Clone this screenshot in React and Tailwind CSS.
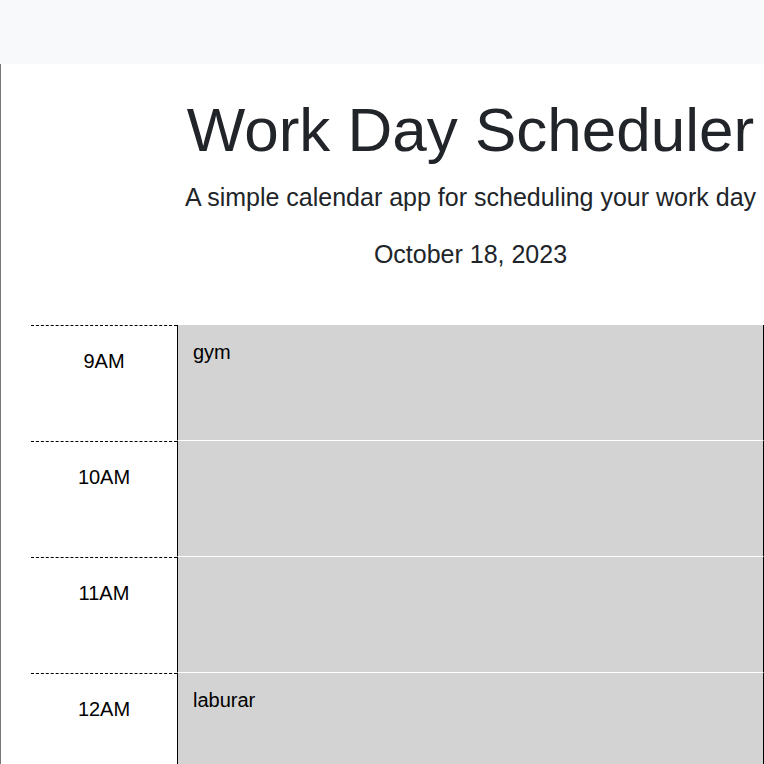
const hours = [
  { label: "9AM", note: "gym" },
  { label: "10AM", note: "" },
  { label: "11AM", note: "" },
  { label: "12AM", note: "laburar" },
];

function TimeBlock({ label, note }) {
  return (
    <div className="flex h-[116px]">
      <div className="w-[146px] shrink-0 border-t border-dashed border-black pt-[20px] text-center text-[20px] leading-[30px] text-black">
        {label}
      </div>
      <textarea
        defaultValue={note}
        className="flex-1 resize-none border-l border-r border-b border-l-black border-r-black border-b-white bg-[#d3d3d3] pt-[12px] px-[15px] text-[20px] leading-[30px] text-black outline-none"
      />
    </div>
  );
}

export default function App() {
  return (
    <div className="w-[764px] h-[764px] overflow-hidden bg-white font-['Liberation_Sans',Arial,sans-serif]">
      <div className="h-16 bg-[#f8f9fa]" />
      <div className="border-l border-[#767676] min-h-[700px]">
        <header className="w-[939px] text-center text-[#212529]">
          <h1 className="pt-[29px] text-[62px] font-light leading-[1.2]">Work Day Scheduler</h1>
          <p className="mt-[12px] text-[25px] leading-[1.5]">A simple calendar app for scheduling your work day</p>
          <p className="mt-[19px] text-[25px] leading-[1.5]">October 18, 2023</p>
        </header>
        <div className="mt-[52px] pl-[30px]">
          {hours.map((h) => (
            <TimeBlock key={h.label} label={h.label} note={h.note} />
          ))}
        </div>
      </div>
    </div>
  );
}
